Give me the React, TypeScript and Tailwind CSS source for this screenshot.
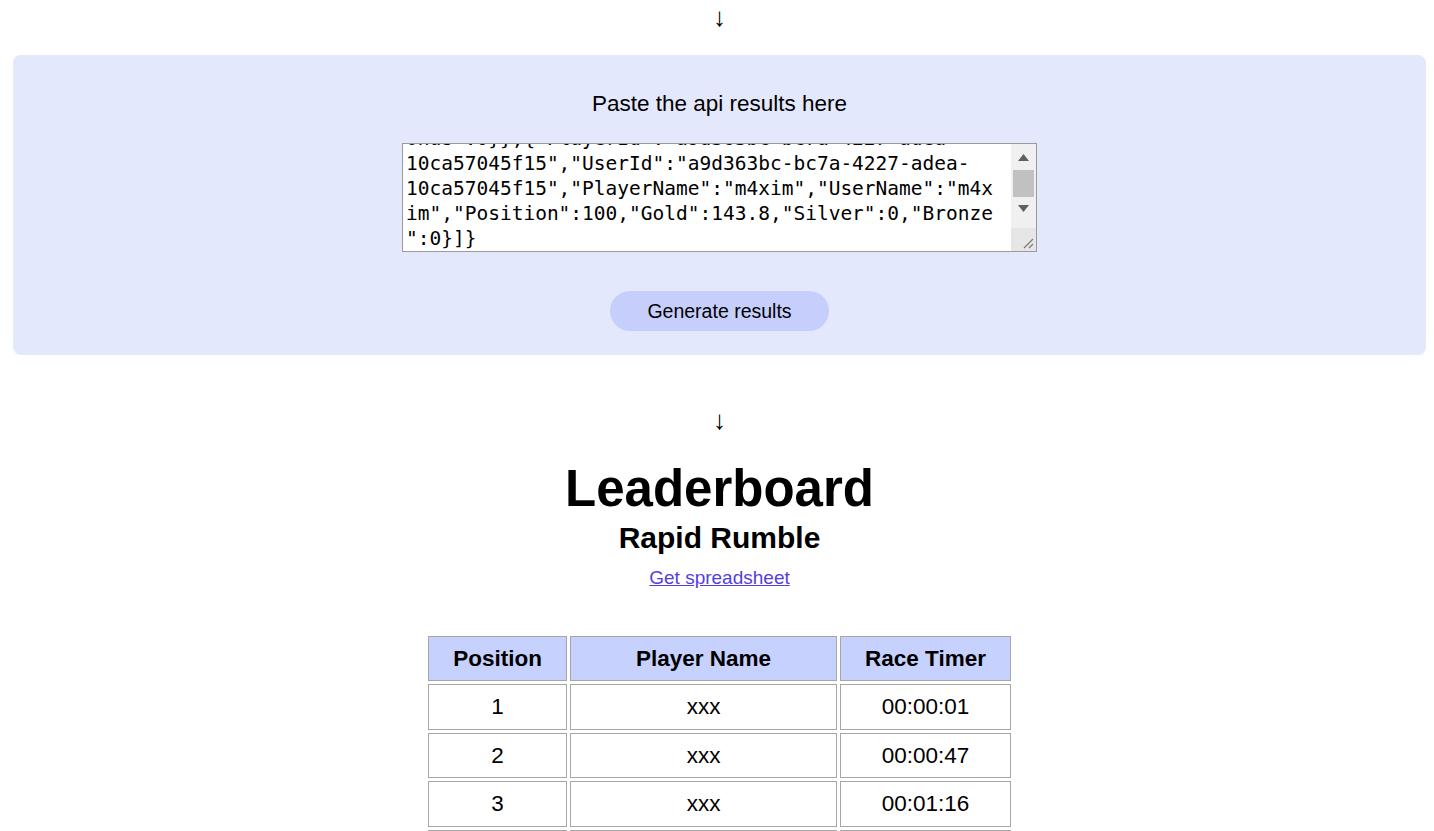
import { useEffect, useRef } from 'react';

const apiResults =
  '[{"RaceId":"5f0c2a8e-3d41-4b7a-9c2e-7a1d55e0b9c3","RaceName":"Rapid Rumble","Results":[{"PlayerId":"1b7e44c2-08fa-4d3e-b5a1-92c6f0e3d7a8","UserId":"1b7e44c2-08fa-4d3e-b5a1-92c6f0e3d7a8","PlayerName":"xxx","UserName":"xxx","Position":1,"Gold":0,"Silver":0,"B\nonus":0}},{"PlayerId":"a9d363bc-bc7a-4227-adea-10ca57045f15","UserId":"a9d363bc-bc7a-4227-adea-10ca57045f15","PlayerName":"m4xim","UserName":"m4xim","Position":100,"Gold":143.8,"Silver":0,"Bronze":0}]}';

const rows = [
  { position: 1, name: 'xxx', time: '00:00:01' },
  { position: 2, name: 'xxx', time: '00:00:47' },
  { position: 3, name: 'xxx', time: '00:01:16' },
  { position: 4, name: 'xxx', time: '00:01:32' },
  { position: 5, name: 'xxx', time: '00:02:05' },
];

const ApiInput = () => {
  const ref = useRef<HTMLTextAreaElement>(null);

  useEffect(() => {
    if (ref.current) ref.current.scrollTop = ref.current.scrollHeight;
  }, []);

  return (
    <div className="mx-auto mt-[26px] flex h-[109px] w-[635px] border border-[#9a9a9a] bg-white">
      <textarea
        ref={ref}
        readOnly
        value={apiResults}
        className="h-full w-[608px] resize-none overflow-hidden pt-[2px] pr-[14px] pb-0 pl-[3px] font-['DejaVu_Sans_Mono',monospace] text-[19.5px] leading-[25px] text-black outline-none"
      />
      {/* scrollbar + resize grip */}
      <div className="flex w-[25px] flex-col bg-[#f0f0f0]">
        <div className="flex h-[26px] items-center justify-center">
          <svg width="11" height="7" viewBox="0 0 11 7"><path d="M5.5 0 11 7H0z" fill="#606060" /></svg>
        </div>
        <div className="mx-[2px] h-[27px] bg-[#c1c1c1]" />
        <div className="flex h-[22px] items-center justify-center">
          <svg width="11" height="7" viewBox="0 0 11 7"><path d="M0 0h11L5.5 7z" fill="#606060" /></svg>
        </div>
        <div className="flex-1" />
        <div className="flex h-[23px] items-end justify-end bg-[#e6e6e6] p-[2px]">
          <svg width="12" height="12" viewBox="0 0 12 12">
            <path d="M11 2 2 11M11 7 7 11" stroke="#7a7a7a" strokeWidth="1.2" />
          </svg>
        </div>
      </div>
    </div>
  );
};

export default function App() {
  return (
    <div className="min-h-screen bg-white pl-[5px] font-['Liberation_Sans',Arial,sans-serif] text-[22.5px] text-black">
      <div className="pt-[4px] text-center text-[26px] leading-[26px]">↓</div>

      <section className="mx-[8px] mt-[25px] h-[300px] rounded-[8px] bg-[#e4e8fc] pt-[36px] text-center">
        <p className="leading-[26px]">Paste the api results here</p>
        <ApiInput />
        <button className="mt-[39px] h-[40px] w-[219px] rounded-full bg-[#c6cffc] pt-[1px] text-[19.5px] text-black">
          Generate results
        </button>
      </section>

      <div className="mt-[52px] text-center text-[26px] leading-[26px]">↓</div>

      <div className="text-center">
        <h1 className="mt-[30px] text-[51px] leading-[51px] font-bold">Leaderboard</h1>
        <h2 className="mt-[9px] text-[30px] leading-[30px] font-bold">Rapid Rumble</h2>
        <a href="#" className="mt-[14px] inline-block text-[19px] leading-[22px] text-[#553ee0] underline">
          Get spreadsheet
        </a>
      </div>

      <table className="mx-auto mt-[39px] border-separate border-spacing-[3px]">
        <thead>
          <tr>
            <th className="h-[45.5px] w-[139px] border border-[#a6a6a6] bg-[#c6d1fd] font-bold">Position</th>
            <th className="h-[45.5px] w-[267px] border border-[#a6a6a6] bg-[#c6d1fd] font-bold">Player Name</th>
            <th className="h-[45.5px] w-[171px] border border-[#a6a6a6] bg-[#c6d1fd] font-bold">Race Timer</th>
          </tr>
        </thead>
        <tbody>
          {rows.map((row) => (
            <tr key={row.position}>
              <td className="h-[45.5px] border border-[#a6a6a6] text-center">{row.position}</td>
              <td className="h-[45.5px] border border-[#a6a6a6] text-center">{row.name}</td>
              <td className="h-[45.5px] border border-[#a6a6a6] text-center">{row.time}</td>
            </tr>
          ))}
        </tbody>
      </table>
    </div>
  );
}
